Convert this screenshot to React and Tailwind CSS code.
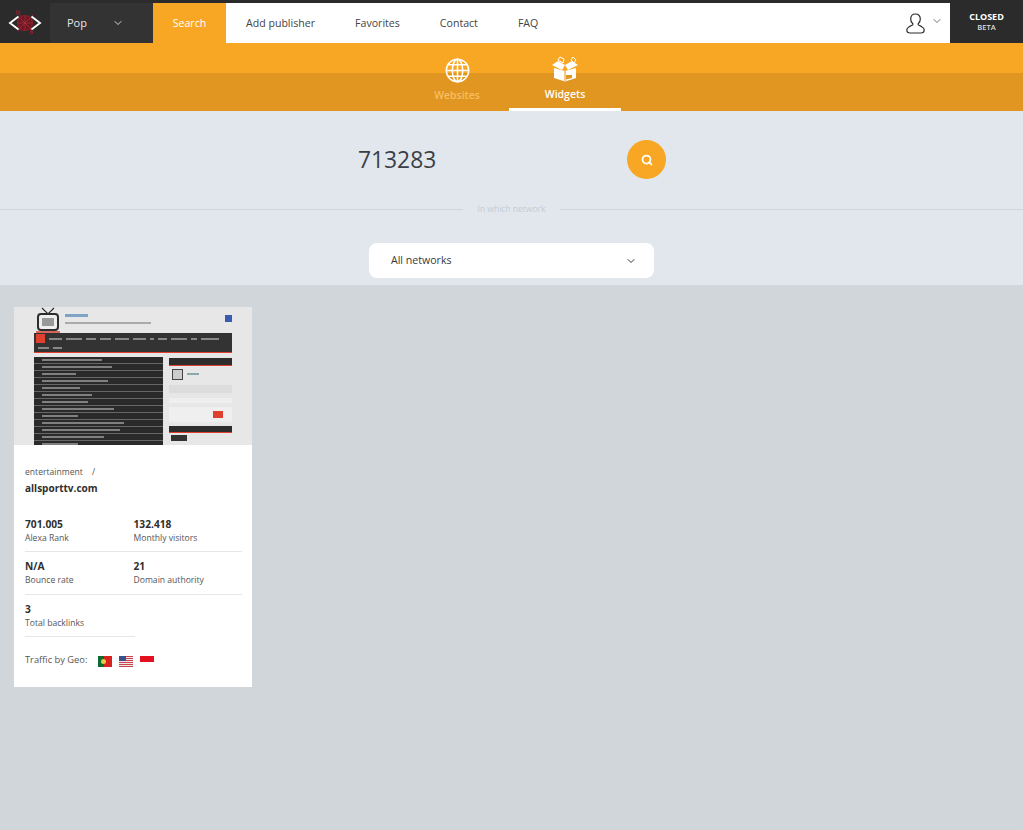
import { ChevronDown, Search } from 'lucide-react'

const font = { fontFamily: '"Open Sans", sans-serif' }

function Logo() {
  return (
    <svg width="34" height="30" viewBox="0 0 34 30" fill="none">
      <g stroke="#8f1f2c" strokeWidth="1.1">
        <circle cx="17" cy="15" r="7.500" fill="#6d1822" />
        <circle cx="10" cy="4.500" r="1.600" />
        <circle cx="23.500" cy="24.500" r="1.200" />
        <path d="M11 6l3 3.500M23 9l2-2.500M10 23l2.500-2.500M22 20.500l2 3" />
        <path d="M17 8v14M10 15h14M12 10l10 10M22 10l-10 10" stroke="#a8323f" strokeWidth=".7" />
      </g>
      <path d="M10.500 8.500L2 15l8.500 6.500M23.500 8.500L32 15l-8.500 6.500" stroke="#fff" strokeWidth="1.900" />
    </svg>
  )
}

function UserIcon() {
  return (
    <svg width="19" height="21" viewBox="0 0 19 21" fill="none" stroke="#2b2b2b" strokeWidth="1.200">
      <path d="M9.500 1c-2.900 0-4.800 2-4.800 5 0 2 .8 3.500 1.900 4.500.4.400.4 1.200-.1 1.500C3.500 13.300.8 14.500.8 17c0 1.800 1.400 3 3.400 3h10.600c2 0 3.400-1.200 3.400-3 0-2.500-2.700-3.700-5.700-5-.5-.3-.5-1.100-.1-1.500 1.100-1 1.900-2.500 1.900-4.500 0-3-1.900-5-4.800-5z" />
    </svg>
  )
}

function GlobeIcon() {
  return (
    <svg width="25" height="25" viewBox="0 0 25 25" fill="none" stroke="#fff" strokeWidth="1.500">
      <circle cx="12.500" cy="12.500" r="11.200" />
      <ellipse cx="12.500" cy="12.500" rx="5.200" ry="11.200" />
      <path d="M12.500 1.300v22.400M1.300 12.500h22.400M3 6.800h19M3 18.200h19" />
    </svg>
  )
}

function WidgetsIcon() {
  return (
    <svg width="28" height="26" viewBox="0 0 28 26" fill="none">
      <path d="M3 12l11 3 11-3v10l-11 3.500L3 22z" fill="#fff" />
      <path d="M14 15v10" stroke="#e09620" strokeWidth="1" />
      <path d="M1 9l6-4 7 4-3 5zM27 9l-6-4-7 4 3 5z" fill="#fff" />
      <path d="M7 4l2-3 4 2-1 4zM20 4l2-3 3 3-2 3z" stroke="#fff" strokeWidth="1" />
      <path d="M15 19h6v3l-6 1.500z" fill="#e09620" />
    </svg>
  )
}

function TvIcon() {
  return (
    <svg width="24" height="26" viewBox="0 0 24 26" fill="none">
      <path d="M6 1l6 6 6-6" stroke="#2d2d2d" strokeWidth="1.200" />
      <rect x="2" y="7" width="20" height="16" rx="3" fill="#eee" stroke="#2d2d2d" strokeWidth="2" />
      <rect x="6" y="11" width="12" height="8" fill="#999" />
      <path d="M0 25h24" stroke="#d33a2c" strokeWidth="1.500" />
    </svg>
  )
}

function Stat({ value, label, className }) {
  return (
    <div className={className}>
      <div className="text-[10.200px] leading-[14px] font-bold text-[#2f2f2f]">{value}</div>
      <div className="text-[8.600px] leading-[14px] text-[#555]">{label}</div>
    </div>
  )
}

function Thumbnail() {
  const rows = ['w-[60px]', 'w-[70px]', 'w-[34px]', 'w-[66px]', 'w-[38px]', 'w-[50px]', 'w-[46px]', 'w-[72px]', 'w-[36px]', 'w-[82px]', 'w-[78px]', 'w-[62px]', 'w-[36px]']
  return (
    <div className="h-[138px] bg-[#e7e7e7] overflow-hidden pl-5 pr-5 blur-[0.6px]">
      <div className="h-[26px] flex items-start">
        <div className="ml-[2px]"><TvIcon /></div>
        <div className="ml-[5px] pt-[7px] flex-1">
          <div className="w-[23px] h-[3px] bg-[#7fa3c4]" />
          <div className="w-[86px] h-[2px] mt-[5px] bg-[#aaa]" />
        </div>
        <div className="w-[7px] h-[7px] mt-2 bg-[#3b5bb0]" />
      </div>
      <div className="h-5 bg-[#333] border-b border-[#e0402f] relative">
        <div className="flex gap-1 px-[2px] pt-px">
          <div className="w-[9px] h-[9px] bg-[#e0402f]" />
          {['w-[13px]', 'w-[16px]', 'w-[10px]', 'w-[11px]', 'w-[14px]', 'w-[13px]', 'w-[4px]', 'w-[9px]', 'w-[16px]', 'w-[6px]', 'w-[18px]'].map((w, i) => (
            <div key={i} className={`${w} h-[2px] mt-1 bg-[#888]`} />
          ))}
        </div>
        <div className="flex gap-1 px-1 mt-1">
          <div className="w-[11px] h-[2px] bg-[#888]" />
          <div className="w-[9px] h-[2px] bg-[#888]" />
        </div>
      </div>
      <div className="flex justify-between mt-1">
        <div className="w-[129px] flex flex-col gap-[1px] bg-[#666] h-[90px]">
          {rows.map((w, i) => (
            <div key={i} className="h-[6px] bg-[#2a2a2a] pl-[8px] pt-[2px]">
              <div className={`${w} h-[2px] bg-[#808080]`} />
            </div>
          ))}
        </div>
        <div className="w-[63px]">
          <div className="h-[8px] mt-px bg-[#2d2d2d] border-b border-[#e0402f]" />
          <div className="h-[19px] flex pt-[3px] pl-[3px] gap-1">
            <div className="w-[11px] h-[11px] border border-[#444] bg-[#ccc]" />
            <div className="w-[12px] h-[2px] mt-1 bg-[#8aa]" />
          </div>
          <div className="h-[8px] bg-[#dcdcdc]" />
          <div className="h-[5px] mt-[5px] bg-[#efefef]" />
          <div className="h-[15px] mt-1 flex justify-end pr-[9px] items-center bg-[#efefef]">
            <div className="w-[10px] h-[7px] bg-[#e0402f]" />
          </div>
          <div className="h-[7px] mt-1 bg-[#2d2d2d] border-b border-[#e0402f]" />
          <div className="w-[16px] h-[6px] mt-[2px] ml-[2px] bg-[#333]" />
        </div>
      </div>
    </div>
  )
}

export default function App() {
  return (
    <div style={font} className="min-h-[830px] bg-[#d1d6da] text-[#3a3a3a]">
      <header className="h-[43px] pt-[3px] bg-[#2b2b2b] flex text-[10.600px]">
        <div className="w-[50px] flex items-center justify-center bg-[#2b2b2b]"><Logo /></div>
        <div className="w-[103px] bg-[#333] flex items-center pl-[17px] pr-[29px] justify-between text-[#e6e6e6] text-[11px]">
          <span className="pt-px">Pop</span>
          <ChevronDown size={12} strokeWidth={1.800} />
        </div>
        <div className="w-[73px] bg-[#f7a723] text-white flex items-center justify-center pt-px">Search</div>
        <nav className="flex-1 bg-white flex items-center pl-5 pr-[7px] text-[#444]">
          <span className="pt-px">Add publisher</span>
          <span className="ml-10 pt-px">Favorites</span>
          <span className="ml-10 pt-px">Contact</span>
          <span className="ml-10 pt-px">FAQ</span>
          <span className="ml-auto"><UserIcon /></span>
          <ChevronDown size={12} strokeWidth={1.500} className="ml-[6px] mb-1" />
        </nav>
        <div className="w-[73px] pb-[3px] flex flex-col items-center justify-center text-white">
          <span className="text-[9px] leading-[11px] font-bold">CLOSED</span>
          <span className="text-[7.500px] leading-[10px] font-semibold text-[#ddd]">BETA</span>
        </div>
      </header>

      <div className="h-[68px] bg-[linear-gradient(#f7a723_30px,#e09620_30px)] flex pl-[405px]">
        <div className="w-[104px] pt-[15px] flex flex-col items-center">
          <GlobeIcon />
          <span className="text-[10.400px] leading-[14px] mt-[5px] font-semibold text-[#f6bf63]">Websites</span>
        </div>
        <div className="w-[112px] h-[68px] pt-[13px] flex flex-col items-center border-b-[3px] border-white">
          <WidgetsIcon />
          <span className="text-[10.500px] leading-[14px] mt-[5px] font-semibold text-white">Widgets</span>
        </div>
      </div>

      <section className="h-[174px] bg-[#e2e7ee] flex flex-col">
        <div className="flex items-center justify-between pl-[358px] pr-[357px] pt-[29px]">
          <span className="text-[22.800px] leading-[39px] text-[#3a3f45]">713283</span>
          <button className="w-[39px] h-[39px] rounded-full bg-[#f7a723] text-white flex items-center justify-center">
            <Search size={12} strokeWidth={3.500} />
          </button>
        </div>
        <div className="flex items-center mt-6">
          <div className="flex-1 h-px bg-[#cfd5dc]" />
          <span className="w-[97px] text-center text-[8.500px] leading-3 text-[#c5cbd3]">In which network</span>
          <div className="flex-1 h-px bg-[#cfd5dc]" />
        </div>
        <div className="mx-auto mt-7 w-[285px] h-[35px] bg-white rounded-lg flex items-center justify-between pl-[22px] pr-[17px] text-[10.600px] text-[#3a3a3a]">
          <span className="pt-px">All networks</span>
          <ChevronDown size={12} strokeWidth={2} />
        </div>
      </section>

      <main className="pt-[22px] pl-[14px]">
        <article className="w-[238px] h-[380px] bg-white">
          <Thumbnail />
          <div className="px-[11px] pt-[21px]">
            <div className="text-[8.600px] leading-3 text-[#555]">entertainment<span className="ml-[9px]">/</span></div>
            <div className="text-[10px] leading-[14px] mt-[3px] font-bold text-[#2f2f2f]">allsporttv.com</div>
            <div className="grid grid-cols-2 mt-[22px] w-[217px]">
              <Stat value="701.005" label="Alexa Rank" className="h-[35px] border-b border-[#e6e6e6] pr-2" />
              <Stat value="132.418" label="Monthly visitors" className="h-[35px] border-b border-[#e6e6e6]" />
              <Stat value="N/A" label="Bounce rate" className="h-[43px] pt-[7px] border-b border-[#e6e6e6]" />
              <Stat value="21" label="Domain authority" className="h-[43px] pt-[7px] border-b border-[#e6e6e6]" />
              <Stat value="3" label="Total backlinks" className="h-[42px] pt-[7px] border-b border-[#e6e6e6] -mr-px" />
            </div>
            <div className="flex items-start mt-4 text-[9.300px] leading-[14px] text-[#555]">
              <span className="w-[73px]">Traffic by Geo:</span>
              <span className="w-[14px] h-[11px] mt-[3px] bg-[linear-gradient(90deg,#0b6b30_40%,#d8221e_40%)] relative">
                <span className="absolute left-[3px] top-[3px] w-[5px] h-[5px] rounded-full bg-[#e8c84a]" />
              </span>
              <span className="ml-[7px] w-[14px] h-[11px] mt-[3px] bg-[repeating-linear-gradient(#c9454f_0,#c9454f_1px,#f3e6e6_1px,#f3e6e6_2px)] relative">
                <span className="absolute left-0 top-0 w-[7px] h-[5px] bg-[#3c4f8a]" />
              </span>
              <span className="ml-[7px] w-[14px] h-[6px] mt-[3px] bg-[#e3101f]" />
            </div>
          </div>
        </article>
      </main>
    </div>
  )
}
